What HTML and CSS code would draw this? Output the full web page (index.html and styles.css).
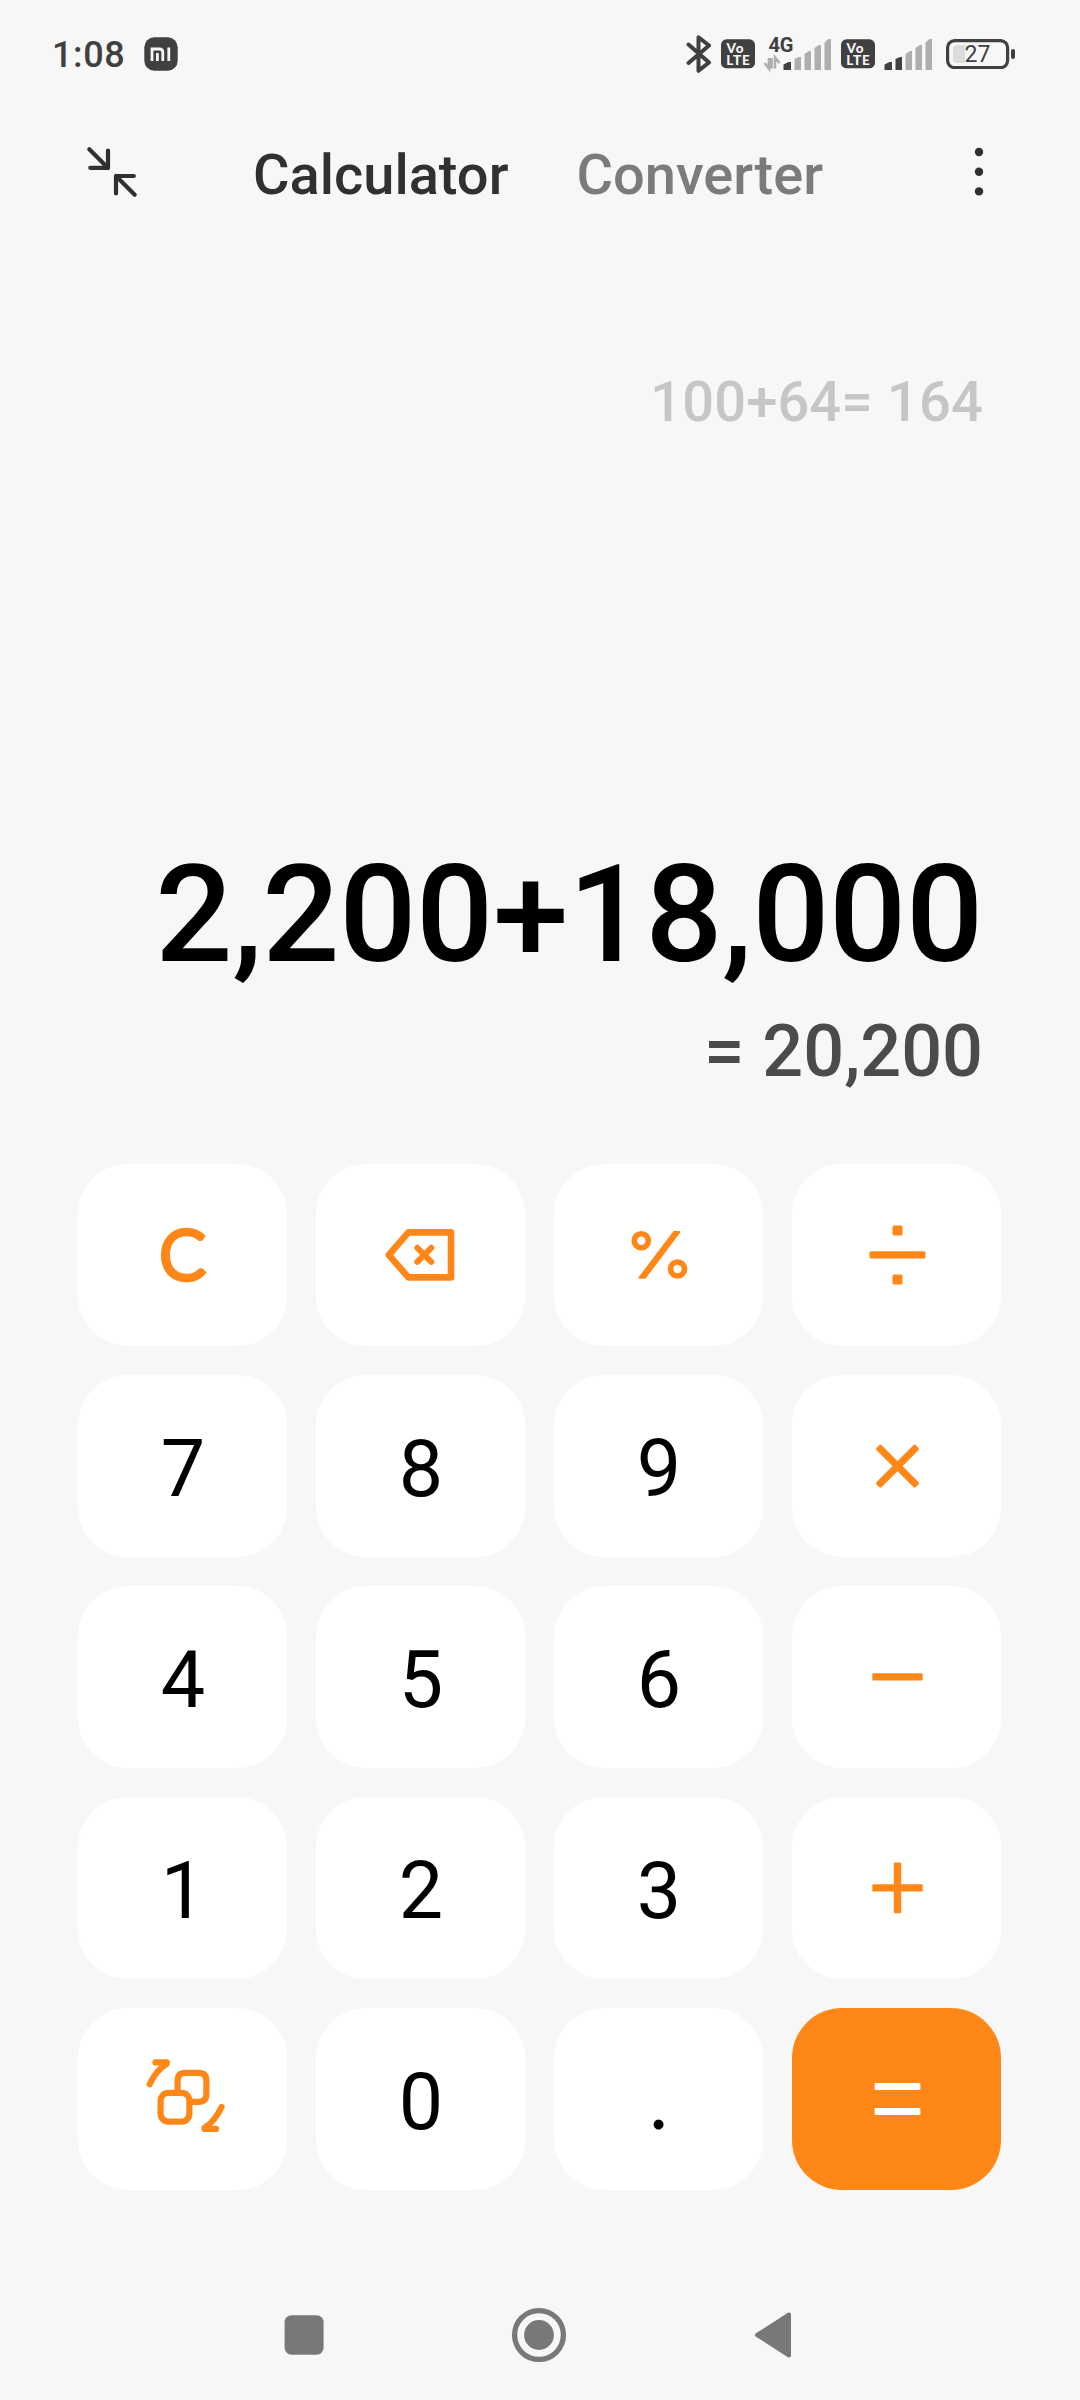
FILE: index.html
```
<!DOCTYPE html>
<html lang="en">
<head>
    <meta charset="UTF-8" />
    <meta name="viewport" content="width=device-width, initial-scale=1.0" />
    <title>Calculator</title>
    <link rel="stylesheet" href="styles.css">
</head>
<body>

    <div class="status-bar">
        <span class="clock">1:08</span>
        <svg class="mi-logo" width="34" height="34" viewBox="0 0 34 34">
            <rect x="0.3" y="0.3" width="33.4" height="33.4" rx="10" fill="#404040" />
            <path d="M8 24V12H15.5Q18.8 12 18.8 15.3V24M13.4 24V16M24.8 10.5V24" fill="none" stroke="#f7f7f7" stroke-width="2.8" />
        </svg>
        <div class="status-icons">
            <svg width="26" height="40" viewBox="0 0 26 40">
                <path d="M2.5 10.5L23 28.5L12.5 36.8V3.2L23 11.5L2.5 29" fill="none" stroke="#404040" stroke-width="4" stroke-linecap="round" stroke-linejoin="round" />
            </svg>
            <svg class="volte" width="34" height="30" viewBox="0 0 34 30">
                <rect x="0" y="0.3" width="34" height="29" rx="5.5" fill="#404040" />
                <text x="5.5" y="13.6" textLength="17">Vo</text>
                <text x="5.3" y="26" textLength="23.5">LTE</text>
            </svg>
            <svg class="signal signal-4g" width="68" height="50" viewBox="0 -8 68 50">
                <text x="4.5" y="14.6" textLength="25">4G</text>
                <path d="M0.5 26L5 31.5V21M7.5 31.5V21M15.5 26L11 20.5V31.5" fill="none" stroke="#aeaeae" stroke-width="2.6" />
                <path d="M19.5 33V27.5L24.5 25H27V33Z" fill="#404040" />
                <path d="M30.5 33V22L35 20H37V33ZM40.5 33V17L45 14H47V33ZM50.5 33V11L55 8H57V33ZM60.5 33V5.5L64.5 2H67V33Z" fill="#aeaeae" />
            </svg>
            <svg class="volte" width="34" height="30" viewBox="0 0 34 30">
                <rect x="0" y="0.3" width="34" height="29" rx="5.5" fill="#404040" />
                <text x="5.5" y="13.6" textLength="17">Vo</text>
                <text x="5.3" y="26" textLength="23.5">LTE</text>
            </svg>
            <svg class="signal" width="49" height="34" viewBox="0 0 49 34">
                <path d="M0.5 33V27.5L5.5 25H8V33ZM11.5 33V22L16 20H18V33Z" fill="#404040" />
                <path d="M21.5 33V17L26 14H28V33ZM31.5 33V11L36 8H38V33ZM41.5 33V5.5L45.5 2H48V33Z" fill="#aeaeae" />
            </svg>
            <svg class="battery" width="70" height="30" viewBox="0 0 70 30">
                <rect x="1.6" y="1.6" width="60" height="27" rx="7" fill="none" stroke="#404040" stroke-width="3.2" />
                <path d="M19 6H11Q7 6 7 10V20Q7 24 11 24H19Z" fill="#dcdcdc" />
                <rect x="65" y="10" width="4" height="10" rx="2" fill="#404040" />
                <text x="31.5" y="23.2">27</text>
            </svg>
        </div>
    </div>

    <div class="header">
        <svg width="56" height="56" viewBox="0 0 56 56">
            <path d="M5.3 5.3L24 24M24 6.5V23.8H6.3M50.7 50.7L32 32M32 49.5V32H49.8" fill="none" stroke="#303030" stroke-width="4.2" stroke-linecap="round" stroke-linejoin="round" />
        </svg>
        <div class="tabs">
            <span class="tab active">Calculator</span>
            <span class="tab">Converter</span>
        </div>
        <svg width="10" height="50" viewBox="0 0 10 50">
            <g fill="#303030">
                <circle cx="5" cy="5" r="4.2" />
                <circle cx="5" cy="24.7" r="4.2" />
                <circle cx="5" cy="44.4" r="4.2" />
            </g>
        </svg>
    </div>

    <div class="display">
        <div class="history">100+64= 164</div>
        <div class="expression">2,200+18,000</div>
        <div class="result">= 20,200</div>
    </div>

    <div class="keypad">
        <button class="key clear">C</button>
        <button class="key operator">
            <svg width="80" height="80" viewBox="0 0 80 80" fill="none" stroke="currentColor" stroke-linecap="round" stroke-linejoin="round">
                <path d="M7.8 40L27.4 17.4H70V62.4H27.4Z" stroke-width="6.6" />
                <path d="M36.3 32.8L50.3 46.8M50.3 32.8L36.3 46.8" stroke-width="6" />
            </svg>
        </button>
        <button class="key operator">
            <svg width="80" height="80" viewBox="0 0 80 80">
                <circle cx="22.3" cy="25.8" r="7" fill="none" stroke="currentColor" stroke-width="5.6" />
                <circle cx="58.5" cy="54" r="7" fill="none" stroke="currentColor" stroke-width="5.6" />
                <path d="M55 17H60.5L26 62.7H20.5Z" fill="currentColor" stroke="currentColor" stroke-width="2" stroke-linejoin="round" />
            </svg>
        </button>
        <button class="key operator">
            <svg width="80" height="80" viewBox="0 0 80 80" fill="currentColor">
                <rect x="12.5" y="36.2" width="56" height="7.4" rx="1.5" />
                <rect x="35.5" y="10.4" width="10" height="10.2" rx="1.5" />
                <rect x="35.5" y="59.4" width="10" height="10.2" rx="1.5" />
            </svg>
        </button>

        <button class="key">7</button>
        <button class="key">8</button>
        <button class="key">9</button>
        <button class="key operator">
            <svg width="80" height="80" viewBox="0 0 80 80" fill="currentColor">
                <rect x="12.7" y="36.5" width="55.6" height="7.2" rx="1.8" transform="rotate(45 40.5 40.1)" />
                <rect x="12.7" y="36.5" width="55.6" height="7.2" rx="1.8" transform="rotate(-45 40.5 40.1)" />
            </svg>
        </button>

        <button class="key">4</button>
        <button class="key">5</button>
        <button class="key">6</button>
        <button class="key operator">
            <svg width="80" height="80" viewBox="0 0 80 80" fill="currentColor">
                <rect x="15.3" y="36.2" width="50.4" height="7.4" rx="1.2" />
            </svg>
        </button>

        <button class="key">1</button>
        <button class="key">2</button>
        <button class="key">3</button>
        <button class="key operator">
            <svg width="80" height="80" viewBox="0 0 80 80" fill="currentColor">
                <rect x="15.3" y="36.2" width="50.4" height="7.4" rx="1.2" />
                <rect x="36.8" y="14.5" width="7.4" height="50.8" rx="1.2" />
            </svg>
        </button>

        <button class="key operator">
            <svg width="80" height="80" viewBox="0 0 80 80" fill="none" stroke="currentColor" stroke-width="6.2" stroke-linecap="round" stroke-linejoin="round" overflow="visible">
                <rect x="17.6" y="33.8" width="28.8" height="28.8" rx="7.8" />
                <path d="M34.6 32V21.6Q34.6 13.8 42.4 13.8H55.6Q63.4 13.8 63.4 21.6V35Q63.4 42.8 55.6 42.8H48" stroke-linecap="butt" />
                <path d="M12.5 3.4H23.8V4.6Q12.5 12 6.7 25.2" />
                <path d="M78.6 48Q71.8 62.5 61.5 68.8V69.9H73" />
            </svg>
        </button>
        <button class="key">0</button>
        <button class="key dot">.</button>
        <button class="key equals">
            <svg width="80" height="80" viewBox="0 0 80 80" fill="currentColor">
                <rect x="17.6" y="24" width="45.8" height="7" rx="1" />
                <rect x="17.6" y="49" width="45.8" height="7" rx="1" />
            </svg>
        </button>
    </div>

    <div class="nav-bar">
        <svg width="40" height="40" viewBox="0 0 40 40">
            <rect x="0.6" y="0.2" width="39" height="39.6" rx="7" fill="#787878" />
        </svg>
        <svg width="56" height="56" viewBox="0 0 56 56">
            <circle cx="28" cy="28" r="24.4" fill="none" stroke="#787878" stroke-width="5.3" />
            <circle cx="28" cy="28" r="14.9" fill="#787878" />
        </svg>
        <svg width="38" height="48" viewBox="0 0 38 48">
            <path d="M3 24L35 3.5V44.5Z" fill="#787878" stroke="#787878" stroke-width="4" stroke-linejoin="round" />
        </svg>
    </div>

</body>
</html>
```

FILE: styles.css
```
body {
    font-family: Roboto, sans-serif;
    margin: 0;
    padding: 0;
    background-color: #f7f7f7;
}

svg {
    display: block;
    flex-shrink: 0;
}

.status-bar {
    height: 108px;
    box-sizing: border-box;
    padding: 0 64px 0 52px;
    display: flex;
    align-items: center;
    color: #404040;
}

.clock {
    font-size: 36px;
    font-weight: 500;
    line-height: 42px;
    letter-spacing: 0.6px;
    padding-top: 2px;
    width: 92px;
}

.status-icons {
    display: flex;
    align-items: center;
    margin-left: auto;
}

.status-icons text {
    font-weight: 700;
    fill: #404040;
}

.volte {
    margin-left: 9px;
}

.status-icons .volte text {
    font-family: Lato, sans-serif;
    font-size: 13.5px;
    font-weight: 900;
    fill: #f7f7f7;
}

.signal {
    margin-left: 9px;
}

.signal-4g text {
    font-size: 20px;
}

.battery {
    margin-left: 13px;
}

.status-icons .battery text {
    font-size: 23px;
    font-weight: 400;
    text-anchor: middle;
}

.header {
    height: 128px;
    box-sizing: border-box;
    padding: 0 96px 0 84px;
    display: flex;
    align-items: center;
}

.tabs {
    display: flex;
    gap: 68px;
    margin-left: 113px;
    margin-right: auto;
    padding-top: 6px;
    font-size: 56px;
    font-weight: 500;
    line-height: 66px;
}

.tab {
    color: #7b7b7b;
}

.tab.active {
    color: #303030;
}

.display {
    height: 928px;
    box-sizing: border-box;
    padding: 133px 97px 70px 0;
    display: flex;
    flex-direction: column;
    text-align: right;
    font-weight: 500;
    white-space: nowrap;
}

.history {
    font-size: 56px;
    line-height: 66px;
    letter-spacing: 0.15px;
    color: #c6c6c6;
}

.expression {
    margin-top: auto;
    font-size: 136px;
    line-height: 160px;
    letter-spacing: -0.35px;
    color: #000;
}

.result {
    margin-top: 15px;
    font-size: 72px;
    line-height: 84px;
    color: #4b4b4b;
}

.keypad {
    display: grid;
    grid-template-columns: repeat(4, 209px);
    grid-auto-rows: 182px;
    gap: 29px;
    padding: 0 78px;
}

.key {
    display: flex;
    align-items: center;
    justify-content: center;
    padding: 6px 0 0 1px;
    border: none;
    border-radius: 50px;
    background-color: #fff;
    color: #000;
    font-family: Roboto, sans-serif;
    font-size: 79px;
    line-height: 92px;
}

.key.operator,
.key.equals {
    padding: 0;
    color: #ff8718;
}

/* round terminals on the clear key */
.key.clear {
    padding: 0 0 4px;
    color: #ff8718;
    font-family: Lato, sans-serif;
    font-size: 67px;
    font-weight: 300;
    -webkit-text-stroke: 5.5px #ff8718;
    stroke-linejoin: round;
}

.key.dot {
    padding: 0;
    font-family: Lato, sans-serif;
}

.key.equals {
    background-color: #ff8718;
    color: #fff;
}

.nav-bar {
    height: 130px;
    margin-top: 80px;
    box-sizing: border-box;
    padding: 0 288px 0 284px;
    display: flex;
    align-items: center;
    justify-content: space-between;
}
```
